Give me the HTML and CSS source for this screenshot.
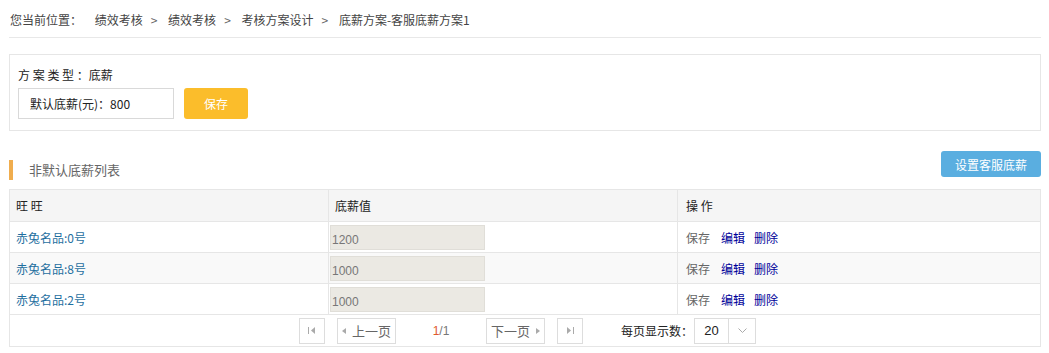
FILE: index.html
```html
<!DOCTYPE html>
<html lang="zh-CN">
<head>
    <meta charset="UTF-8">
    <title>底薪方案</title>
    <link rel="stylesheet" href="styles.css">
</head>
<body>
    <div class="crumbs">
        <span class="crumb-label">您当前位置：</span>
        <span>绩效考核</span><span class="sep">&gt;</span>
        <span>绩效考核</span><span class="sep">&gt;</span>
        <span>考核方案设计</span><span class="sep">&gt;</span>
        <span>底薪方案-客服底薪方案1</span>
    </div>

    <div class="plan-box">
        <div class="plan-type">方 案 类 型 ：底薪</div>
        <div class="plan-row">
            <div class="plan-input">默认底薪(元)：800</div>
            <button class="btn-save">保存</button>
        </div>
    </div>

    <div class="list-head">
        <div class="list-title">非默认底薪列表</div>
        <button class="btn-blue">设置客服底薪</button>
    </div>

    <table class="grid">
        <thead>
            <tr>
                <th class="c1">旺 旺</th>
                <th class="c2">底薪值</th>
                <th class="c3">操 作</th>
            </tr>
        </thead>
        <tbody>
            <tr>
                <td><a class="name">赤兔名品:0号</a></td>
                <td><input class="val" value="1200" readonly></td>
                <td class="ops"><span class="op-save">保存</span><a>编辑</a><a>删除</a></td>
            </tr>
            <tr class="alt">
                <td><a class="name">赤兔名品:8号</a></td>
                <td><input class="val" value="1000" readonly></td>
                <td class="ops"><span class="op-save">保存</span><a>编辑</a><a>删除</a></td>
            </tr>
            <tr>
                <td><a class="name">赤兔名品:2号</a></td>
                <td><input class="val" value="1000" readonly></td>
                <td class="ops"><span class="op-save">保存</span><a>编辑</a><a>删除</a></td>
            </tr>
            <tr>
                <td colspan="3" class="pager-cell">
                    <div class="pager">
                        <span class="pbtn sq">
                            <svg width="8" height="7" viewBox="0 0 8 7"><rect x="0" y="0" width="1" height="7" fill="#aaa"/><path d="M7 0 L3 3.5 L7 7 Z" fill="#aaa"/></svg>
                        </span>
                        <span class="pbtn wide"><i class="tri-l"></i>上一页</span>
                        <span class="pnum"><b>1</b>/1</span>
                        <span class="pbtn wide">下一页<i class="tri-r"></i></span>
                        <span class="pbtn sq">
                            <svg width="8" height="7" viewBox="0 0 8 7"><path d="M1 0 L5 3.5 L1 7 Z" fill="#aaa"/><rect x="7" y="0" width="1" height="7" fill="#aaa"/></svg>
                        </span>
                        <span class="per">每页显示数：</span>
                        <span class="sel">
                            <span class="sel-val">20</span>
                            <span class="sel-arrow">
                                <svg width="9" height="5" viewBox="0 0 9 5"><path d="M0.5 0.5 L4.5 4.5 L8.5 0.5" fill="none" stroke="#aaa" stroke-width="1"/></svg>
                            </span>
                        </span>
                    </div>
                </td>
            </tr>
        </tbody>
    </table>
</body>
</html>
```

FILE: styles.css
```css
body {
    margin: 0;
    padding: 0 8px 0 9px;
    font-family: "Noto Sans CJK SC", "Liberation Sans", sans-serif;
    font-size: 12px;
    color: #333;
    background: #fff;
}
.crumbs {
    height: 37px;
    line-height: 40px;
    padding-left: 1px;
    border-bottom: 1px solid #e8e8e8;
    color: #444;
    font-size: 12px;
}
.crumb-label {
    margin-right: 10px;
}
.sep {
    margin: 0 8px;
    color: #666;
}
.plan-box {
    margin-top: 16px;
    height: 75px;
    border: 1px solid #e6e6e6;
    padding: 0 8px;
}
.plan-type {
    margin-top: 11px;
    line-height: 18px;
    color: #222;
}
.plan-row {
    display: flex;
    align-items: center;
    margin-top: 4px;
}
.plan-input {
    width: 143px;
    height: 29px;
    line-height: 29px;
    padding-left: 11px;
    border: 1px solid #d9d9d9;
    color: #222;
}
.btn-save {
    margin-left: 10px;
    width: 64px;
    height: 31px;
    border: none;
    border-radius: 3px;
    background: #fbbd2b;
    color: #fff;
    font-family: inherit;
    font-size: 12px;
    cursor: pointer;
}
.list-head {
    display: flex;
    justify-content: space-between;
    align-items: flex-start;
    margin-top: 20px;
    height: 38px;
}
.list-title {
    margin-top: 9px;
    height: 20px;
    line-height: 20px;
    border-left: 4px solid #f0ad4e;
    padding-left: 16px;
    color: #666;
    font-size: 13px;
}
.btn-blue {
    width: 100px;
    height: 26px;
    border: none;
    border-radius: 3px;
    background: #5aaee0;
    color: #fff;
    font-family: inherit;
    font-size: 12px;
    cursor: pointer;
}
.grid {
    width: 100%;
    border-collapse: collapse;
    border: 1px solid #e6e6e6;
}
.grid th, .grid td {
    border: 1px solid #e6e6e6;
    text-align: left;
    padding: 0 0 0 6px;
    height: 30px;
    font-weight: normal;
}
.grid th {
    background: #f5f5f5;
    height: 31px;
    color: #222;
}
.grid .c1 {
    width: 312px;
}
.grid .c2 {
    width: 342px;
}
.grid th.c3, .grid td.ops {
    padding-left: 8px;
}
.grid td:nth-child(2) {
    padding-left: 1px;
}
.grid tr.alt td {
    background: #f9f9f9;
}
.name {
    color: #1f6f9f;
    cursor: pointer;
}
.val {
    width: 155px;
    height: 25px;
    box-sizing: border-box;
    border: 1px solid #e0ded8;
    background: #ebe9e3;
    color: #777;
    font-family: "Liberation Sans", sans-serif;
    font-size: 12px;
    padding: 5px 1px 0;
    margin: 0;
    display: block;
}
.ops .op-save {
    color: #666;
    margin-right: 11px;
}
.ops a {
    color: #000099;
    margin-right: 9px;
    cursor: pointer;
}
.grid td.pager-cell {
    padding: 0;
    height: 31px;
}
.pager {
    display: flex;
    align-items: center;
    margin-left: 289px;
}
.pbtn {
    display: flex;
    align-items: center;
    justify-content: center;
    height: 24px;
    border: 1px solid #ddd;
    color: #666;
    background: #fff;
}
.pbtn.sq {
    width: 24px;
}
.pbtn.wide {
    width: 57px;
    font-size: 13px;
}
.pbtn.sq:first-child {
    margin-right: 12px;
}
.tri-l, .tri-r {
    display: inline-block;
    width: 0;
    height: 0;
    border-top: 3px solid transparent;
    border-bottom: 3px solid transparent;
}
.tri-l {
    border-right: 4px solid #aaa;
    margin-right: 6px;
}
.tri-r {
    border-left: 4px solid #aaa;
    margin-left: 6px;
}
.pnum {
    width: 90px;
    text-align: center;
    color: #777;
    font-family: "Liberation Sans", sans-serif;
    font-size: 12px;
}
.pnum b {
    color: #e05a2b;
    font-weight: normal;
}
.pbtn.wide + .pbtn.sq {
    margin-left: 12px;
}
.per {
    margin-left: 38px;
    color: #222;
}
.sel {
    display: flex;
    height: 24px;
    border: 1px solid #ddd;
    margin-left: 1px;
}
.sel-val {
    width: 33px;
    line-height: 24px;
    text-align: center;
    border-right: 1px solid #ddd;
    color: #222;
    font-family: "Liberation Sans", sans-serif;
    font-size: 13px;
}
.sel-arrow {
    width: 26px;
    display: flex;
    align-items: center;
    justify-content: center;
}
```
